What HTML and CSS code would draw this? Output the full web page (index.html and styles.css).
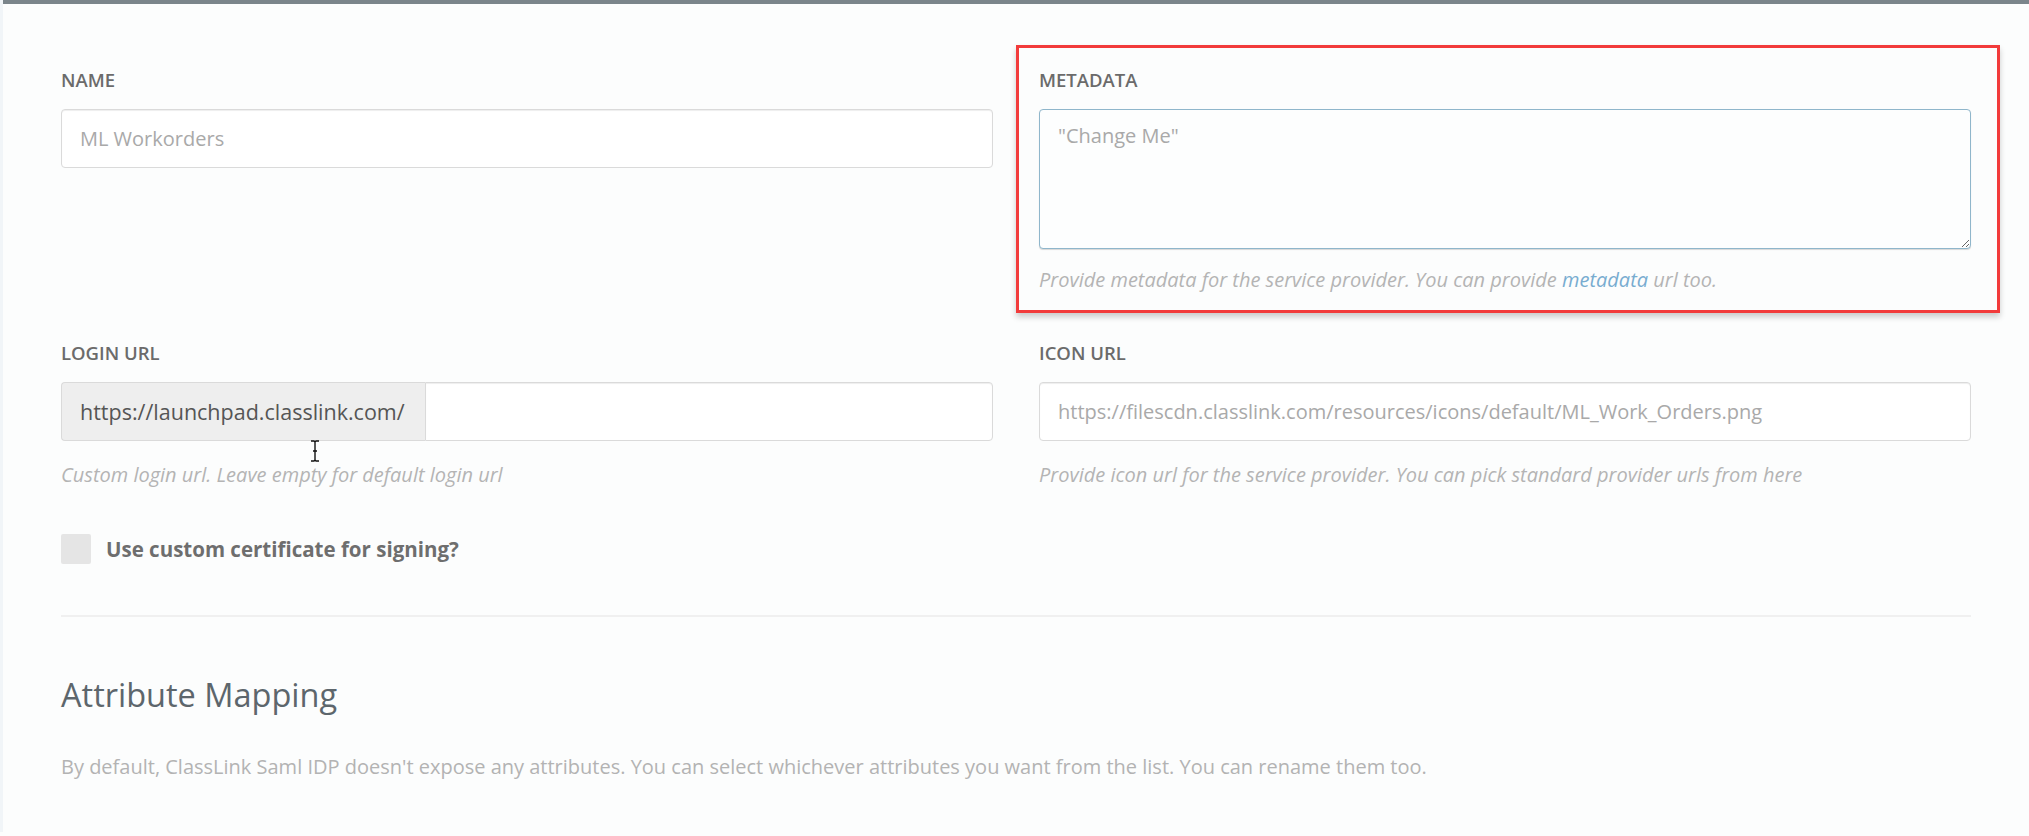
FILE: index.html
```html
<!DOCTYPE html>
<html lang="en">
<head>
    <meta charset="UTF-8">
    <title>SAML Settings</title>
    <link rel="stylesheet" href="styles.css">
</head>
<body>
    <div class="top-bar"></div>

    <div class="form-container">
        <div class="form-row">
            <div class="field">
                <label class="field-label">Name</label>
                <input class="field-input muted" type="text" value="ML Workorders">
            </div>

            <div class="field highlighted">
                <label class="field-label">Metadata</label>
                <textarea class="field-textarea">"Change Me"</textarea>
                <p class="field-help">Provide metadata for the service provider. You can provide <a href="#">metadata</a> url too.</p>
            </div>
        </div>

        <div class="form-row">
            <div class="field">
                <label class="field-label">Login URL</label>
                <div class="input-group">
                    <span class="input-addon">https://launchpad.classlink.com/</span>
                    <input class="field-input grouped" type="text" value="">
                </div>
                <p class="field-help">Custom login url. Leave empty for default login url</p>

                <!-- text cursor from the recording -->
                <svg class="text-cursor" viewBox="0 0 10 22">
                    <path d="M1 1h3l1 1 1-1h3M5 2v18M1 21h3l1-1 1 1h3M3 11h4" fill="none" stroke="#111" stroke-width="1.4"/>
                </svg>
            </div>

            <div class="field">
                <label class="field-label">Icon URL</label>
                <input class="field-input muted" type="text" value="https://filescdn.classlink.com/resources/icons/default/ML_Work_Orders.png">
                <p class="field-help">Provide icon url for the service provider. You can pick standard provider urls from here</p>
            </div>
        </div>

        <div class="checkbox-row">
            <span class="checkbox"></span>
            <span class="checkbox-label">Use custom certificate for signing?</span>
        </div>

        <hr class="divider">

        <h3 class="section-title">Attribute Mapping</h3>
        <p class="section-text">By default, ClassLink Saml IDP doesn't expose any attributes. You can select whichever attributes you want from the list. You can rename them too.</p>
    </div>
</body>
</html>
```

FILE: styles.css
```css
/* Base */
body {
    margin: 0;
    background-color: #fcfdfd;
    font-family: "Open Sans", "Liberation Sans", sans-serif;
    color: #555;
    border-left: 3px solid #f1f5f8;
    min-height: 832px;
}

.top-bar {
    height: 4px;
    background-color: #7b858b;
}

.form-container {
    padding: 64px 58px 0 58px;
}

/* Rows of fields */
.form-row {
    display: grid;
    grid-template-columns: 1fr 1fr;
    gap: 46px;
    margin-bottom: 49px;
}

.field {
    position: relative;
}

.field-label {
    display: block;
    font-size: 18.5px;
    font-weight: 600;
    line-height: 24px;
    text-transform: uppercase;
    color: #6b6b6b;
    margin-bottom: 17px;
}

.field-input {
    display: block;
    box-sizing: border-box;
    width: 100%;
    height: 59px;
    padding: 0 18px;
    font-family: inherit;
    font-size: 20px;
    color: #555;
    background-color: #fff;
    border: 1px solid #dadada;
    border-radius: 4px;
    box-shadow: inset 0 1px 1px rgba(0, 0, 0, 0.07);
    outline: none;
}

.field-input.muted {
    color: #a9a9a9;
}

.field-textarea {
    display: block;
    box-sizing: border-box;
    width: 100%;
    height: 140px;
    padding: 12px 18px;
    font-family: inherit;
    font-size: 20px;
    color: #a9a9a9;
    background-color: #fdfefe;
    border: 1px solid #8fb6cb;
    border-radius: 4px;
    box-shadow: 0 1px 1px rgba(0, 0, 0, 0.15);
    outline: none;
}

.field-help {
    margin: 22px 0 0;
    font-size: 20px;
    font-style: italic;
    line-height: 24px;
    color: #b4b4b4;
}

.highlighted .field-help {
    margin-top: 19px;
}

.field-help a {
    color: #78acd0;
    text-decoration: none;
}

/* Red annotation around the metadata field */
.highlighted::before {
    content: "";
    position: absolute;
    top: -23px;
    left: -23px;
    right: -29px;
    bottom: -21px;
    border: 3px solid #f23b3b;
    box-shadow: 0 4px 6px rgba(0, 0, 0, 0.2);
    pointer-events: none;
}

/* Input with prefix */
.input-group {
    display: flex;
}

.input-addon {
    display: flex;
    align-items: center;
    padding: 0 20px 0 18px;
    height: 59px;
    box-sizing: border-box;
    font-size: 21.5px;
    color: #555;
    background-color: #eeeeee;
    border: 1px solid #dadada;
    border-right: none;
    border-radius: 4px 0 0 4px;
    white-space: nowrap;
}

.field-input.grouped {
    flex: 1;
    border-radius: 0 4px 4px 0;
}

.text-cursor {
    position: absolute;
    left: 249px;
    top: 99px;
    width: 10px;
    height: 22px;
}

/* Checkbox */
.checkbox-row {
    display: flex;
    align-items: center;
    gap: 15px;
    margin-top: -2px;
}

.checkbox {
    width: 30px;
    height: 30px;
    background-color: #e5e5e5;
    border-radius: 2px;
}

.checkbox-label {
    font-size: 20.5px;
    font-weight: 700;
    color: #6e6e6e;
}

.divider {
    margin: 51px 0 0;
    border: none;
    border-top: 2px solid #f0f0f0;
}

/* Attribute mapping section */
.section-title {
    margin: 58px 0 0;
    font-size: 32.5px;
    font-weight: 400;
    line-height: 40px;
    color: #5d666c;
}

.section-text {
    margin: 40px 0 0;
    font-size: 20px;
    line-height: 24px;
    color: #b3b3b3;
}
```
